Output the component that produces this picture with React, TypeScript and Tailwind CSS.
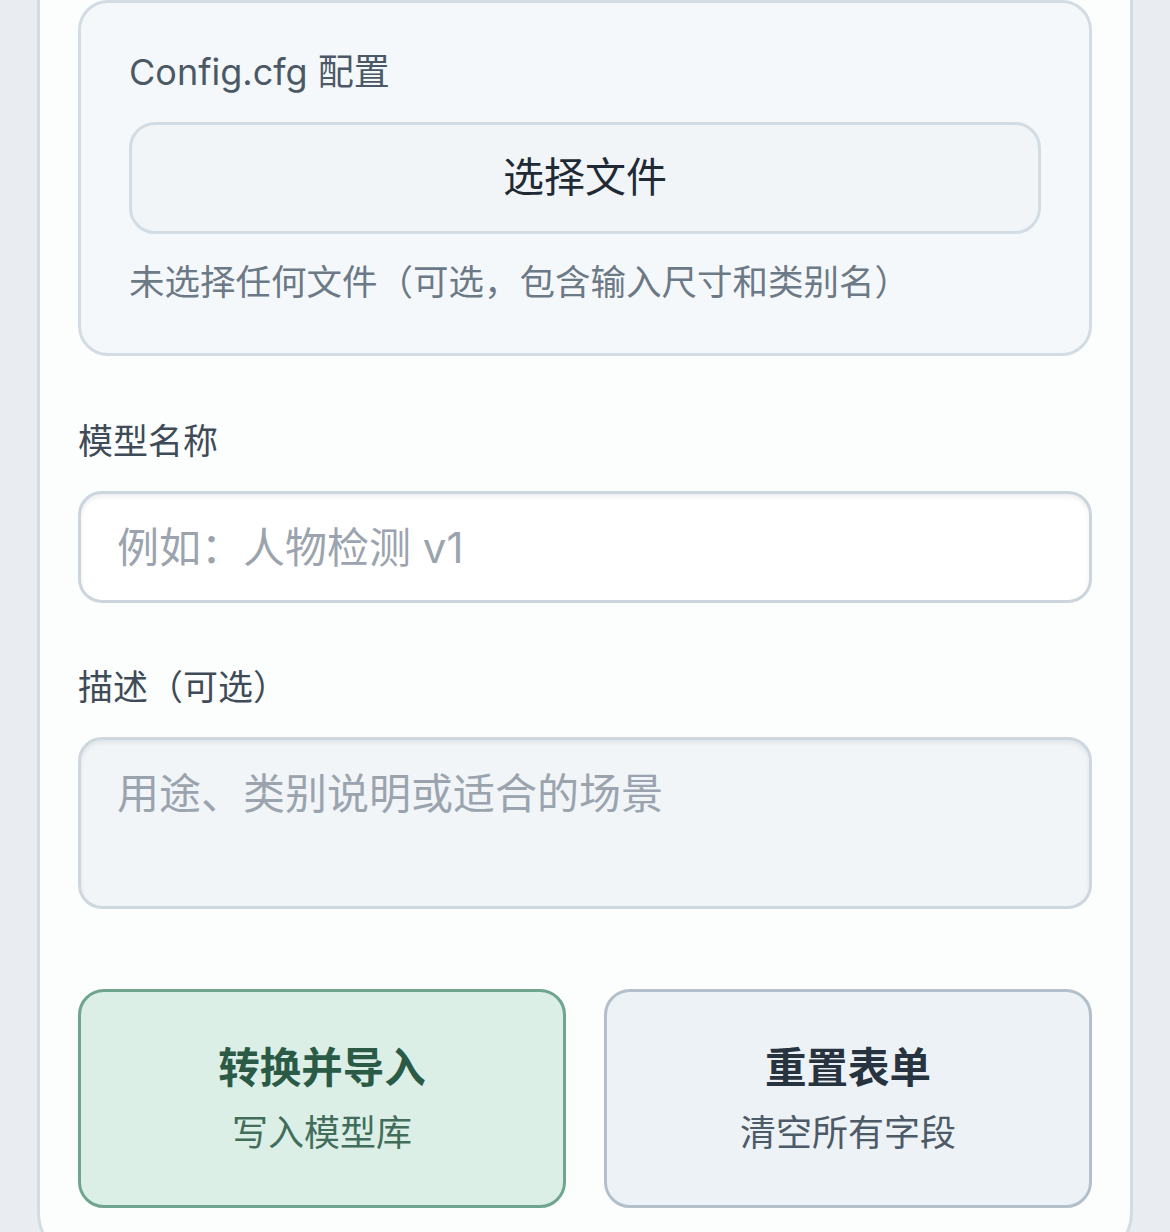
import React from "react";

const font = { fontFamily: 'Inter, "Noto Sans CJK SC", "Noto Sans", sans-serif' };

export default function App() {
  return (
    <div className="min-h-[1232px] w-full bg-[#e9edf1] px-[37px]" style={font}>
      <div className="rounded-b-[48px] border-x-[3px] border-b-[3px] border-[#d4dce3] bg-[#fcfdfd] px-[38px] pb-[50px]">
        {/* Config panel */}
        <div className="rounded-[30px] border-[3px] border-[#d3dce3] bg-[#f5f8fa] px-[48px] pt-[45px] pb-[46px]">
          <div className="text-[36px] leading-[48px] text-[#4b5967]">Config.cfg 配置</div>
          <button className="mt-[26px] flex h-[112px] w-full items-center justify-center rounded-[26px] border-[3px] border-[#d3dbe3] bg-[#f1f5f8] text-[41px] text-[#1f2a35]">
            选择文件
          </button>
          <div className="mt-[25px] text-[35.5px] leading-[48px] text-[#6c7986]">
            未选择任何文件（可选，包含输入尺寸和类别名）
          </div>
        </div>

        {/* Model name */}
        <div className="mt-[61px] text-[35px] leading-[48px] text-[#3f4b57]">模型名称</div>
        <input
          className="mt-[26px] block h-[112px] w-full rounded-[24px] border-[3px] border-[#ccd5dc] bg-white px-[36px] text-[42px] text-[#1f2a35] shadow-[inset_0_3px_4px_rgba(15,23,42,0.07)] outline-none placeholder:text-[#9ba4ae]"
          placeholder="例如：人物检测 v1"
        />

        {/* Description */}
        <div className="mt-[60px] text-[35px] leading-[48px] text-[#3f4b57]">描述（可选）</div>
        <textarea
          className="mt-[26px] block h-[172px] w-full resize-none rounded-[24px] border-[3px] border-[#cfd7de] bg-[#f1f5f8] px-[36px] pt-[26px] text-[42px] leading-[56px] text-[#1f2a35] shadow-[inset_0_3px_4px_rgba(15,23,42,0.07)] outline-none placeholder:text-[#9ba4ae]"
          placeholder="用途、类别说明或适合的场景"
        />

        {/* Actions */}
        <div className="mt-[80px] grid grid-cols-2 gap-[38px]">
          <button className="flex h-[219px] flex-col items-center justify-center rounded-[26px] border-[3px] border-[#6fa48e] bg-[#dcefe7]">
            <span className="text-[41.5px] font-bold leading-[56px] text-[#2b5b47]">转换并导入</span>
            <span className="mt-[13px] text-[36px] leading-[48px] text-[#416d5a]">写入模型库</span>
          </button>
          <button className="flex h-[219px] flex-col items-center justify-center rounded-[26px] border-[3px] border-[#b3c0ca] bg-[#edf2f6]">
            <span className="text-[41.5px] font-bold leading-[56px] text-[#27333f]">重置表单</span>
            <span className="mt-[13px] text-[36px] leading-[48px] text-[#4d5a67]">清空所有字段</span>
          </button>
        </div>
      </div>
    </div>
  );
}
